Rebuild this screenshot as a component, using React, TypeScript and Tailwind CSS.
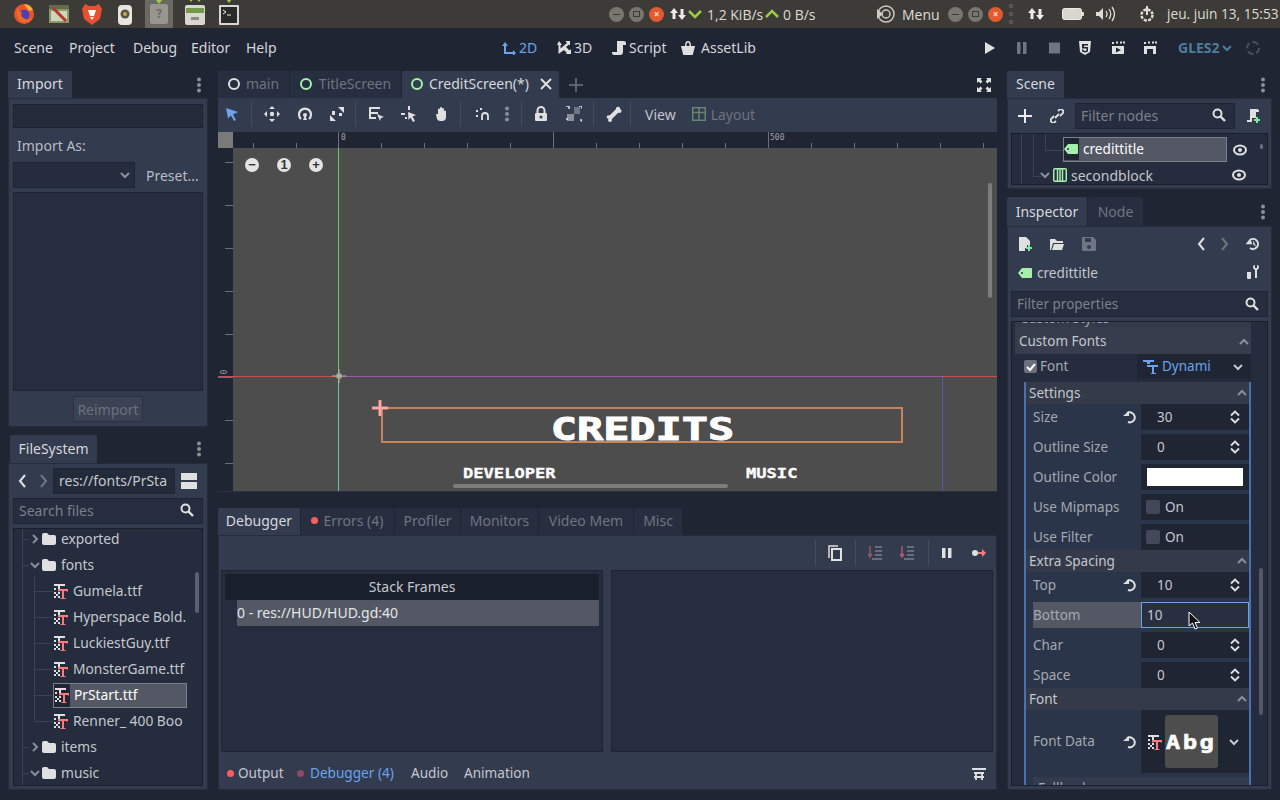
import React from "react";

const W = "#e0e0e0";

function Ic({ w = 16, h = 16, vb, children, className }: { w?: number; h?: number; vb?: string; children: React.ReactNode; className?: string }) {
    return (
        <svg width={w} height={h} viewBox={vb || `0 0 ${w} ${h}`} className={"shrink-0 " + (className || "")}>
            {children}
        </svg>
    );
}

const Dots = () => (
    <Ic w={6} h={16}>
        <circle cx="3" cy="2.5" r="2" fill="#8b8f99" />
        <circle cx="3" cy="8" r="2" fill="#8b8f99" />
        <circle cx="3" cy="13.5" r="2" fill="#8b8f99" />
    </Ic>
);

const Search = () => (
    <Ic w={14} h={14}>
        <circle cx="5.5" cy="5.5" r="4" fill="none" stroke={W} strokeWidth="2" />
        <path d="M8.5 8.5l4.5 4.5" stroke={W} strokeWidth="2.4" />
    </Ic>
);

const Folder = () => (
    <Ic w={14} h={12}>
        <path d="M0 2q0-2 2-2h3l2 2h5q2 0 2 2v6q0 2-2 2H2q-2 0-2-2z" fill={W} />
    </Ic>
);

const Chev = ({ open = false, color = "#8b8f99" }: { open?: boolean; color?: string }) => (
    <Ic w={10} h={10}>
        <path d={open ? "M1 3l4 4 4-4" : "M3 1l4 4-4 4"} fill="none" stroke={color} strokeWidth="2" />
    </Ic>
);

const FontIc = () => (
    <Ic w={16} h={16}>
        <path d="M1 1h11v2H1zM5 3h2v3H5z" fill={W} />
        <path d="M1 5h2v2H1zM1 9h2v2H1zM1 13h2v2H1zM5 9h2v2H5zM5 13h2v2H5zM3 11h2v2H3z" fill={W} />
        <path d="M5 6h10v2.500h-1.500V8H11v7h1.500v1h-5v-1H9V8H6.500v.5H5z" fill="#ff7b7b" />
    </Ic>
);

const Tag = ({ w = 14 }: { w?: number }) => (
    <Ic w={w} h={10} vb="0 0 14 10">
        <path d="M0 5l4-5h9q1 0 1 1v8q0 1-1 1H4z" fill="#a5efac" />
        <circle cx="4" cy="5" r="1" fill="#2c3447" />
    </Ic>
);

const Eye = () => (
    <Ic w={14} h={12}>
        <ellipse cx="7" cy="6" rx="6" ry="4.500" fill="none" stroke={W} strokeWidth="2" />
        <circle cx="7" cy="6" r="2" fill={W} />
    </Ic>
);

const Reset = ({ size = 14 }: { size?: number }) => (
    <Ic w={size} h={size} vb="0 0 14 14">
        <path d="M4 3.200A5 5 0 1 1 5 12" fill="none" stroke={W} strokeWidth="2" />
        <path d="M0 6h6V1z" fill={W} />
    </Ic>
);

const Spin = () => (
    <Ic w={10} h={14}>
        <path d="M1 5.500l4-4 4 4M1 8.500l4 4 4-4" fill="none" stroke={W} strokeWidth="1.800" />
    </Ic>
);

const Up = ({ c = "#8b8f99" }: { c?: string }) => (
    <Ic w={10} h={8}>
        <path d="M1 6l4-4 4 4" fill="none" stroke={c} strokeWidth="2" />
    </Ic>
);

const Sep = ({ className }: { className: string }) => <div className={"w-px h-[26px] bg-[#454c5e] shrink-0 " + className} />;

function EditorTab({ label, active, className }: { label: React.ReactNode; active?: boolean; className: string }) {
    return (
        <div className={"flex items-center justify-center h-full shrink-0 rounded-t-[2px] pb-[2px] " + (active ? "bg-[#333b4f] text-[#d6d8dc] " : "bg-[#272e3f] text-[#70747f] ") + className}>
            {label}
        </div>
    );
}

function OsButtons() {
    return (
        <div className="flex items-center gap-[5px]">
            <div className="w-[15px] h-[15px] rounded-full bg-[#77766f] flex items-center justify-center"><div className="w-[7px] h-px bg-[#3c3b37]" /></div>
            <div className="w-[15px] h-[15px] rounded-full bg-[#77766f] flex items-center justify-center"><div className="w-[7px] h-[6px] border border-[#3c3b37]" /></div>
            <div className="w-[15px] h-[15px] rounded-full bg-[#e25b30] flex items-center justify-center text-[10px] leading-none text-[#f5d8cc] font-bold">×</div>
        </div>
    );
}

const NetArrows = () => (
    <Ic w={18} h={18}>
        <path d="M5 3l4 5H6.500v6h-3V8H1zM13 15l-4-5h2.500V4h3v6H17z" fill="#ececec" />
    </Ic>
);

function OsBar() {
    return (
        <div className="flex items-center h-[28px] bg-[#3c3b37] shrink-0 text-[#dfdbd2] text-[14px] font-['Open_Sans',sans-serif] whitespace-nowrap">
            <div className="w-[13px]" />
            <Ic w={22} h={22}>
                <circle cx="11" cy="11" r="10" fill="#e8542a" />
                <path d="M11 1a10 10 0 0 1 9 6l-4 1-3-4z" fill="#fbb03b" />
                <circle cx="11" cy="12" r="5.500" fill="#4f3fb5" />
                <path d="M4 5q-2 9 5 14 8 2 11-6-3 5-8 3-6-3-3-7-3 0-5-4z" fill="#f36c24" />
            </Ic>
            <div className="w-[13px]" />
            <Ic w={22} h={22}>
                <rect x="1" y="2" width="20" height="18" fill="#8a9a6c" />
                <rect x="1" y="2" width="20" height="4" fill="#5f6e49" />
                <rect x="3" y="8" width="16" height="10" fill="#cfd5bd" />
                <path d="M5 5l13 13" stroke="#b3372c" strokeWidth="3" />
            </Ic>
            <div className="w-[12px]" />
            <Ic w={20} h={24}>
                <path d="M3 2l4 2h6l4-2 3 5-2 10-8 6-8-6L0 7z" fill="#e8502f" />
                <path d="M6 8h8l-2 6h-4zM8 15h4l-2 3z" fill="#fff" />
            </Ic>
            <div className="w-[15px]" />
            <Ic w={16} h={24}>
                <rect x="1" y="3" width="14" height="20" rx="4" fill="#e8e6dc" />
                <circle cx="8" cy="12" r="4.500" fill="#55534a" />
                <circle cx="8" cy="12" r="2" fill="#c8a83c" />
            </Ic>
            <div className="w-[12px]" />
            <div className="w-[28px] h-[28px] bg-[#6a6962] flex items-center justify-center relative">
                <div className="absolute top-0 left-[11px] w-0 h-0 border-x-[3px] border-x-transparent border-t-[4px] border-t-[#9ccc4a]" />
                <div className="w-[18px] h-[20px] bg-[#98968e] rounded-[2px] flex items-center justify-center text-[#6a6962] text-[12px] font-bold">?</div>
            </div>
            <div className="w-[12px]" />
            <div className="relative">
                <div className="absolute -top-[4px] left-[3px] flex gap-[2px]">
                    <div className="w-0 h-0 border-x-[3px] border-x-transparent border-t-[4px] border-t-[#9ccc4a]" />
                    <div className="w-0 h-0 border-x-[3px] border-x-transparent border-t-[4px] border-t-[#9ccc4a]" />
                </div>
                <Ic w={20} h={24}>
                    <rect x="0" y="3" width="20" height="20" rx="2" fill="#d8d7d0" />
                    <rect x="1" y="6" width="18" height="5" fill="#6f9a48" />
                    <rect x="6" y="15" width="8" height="3" fill="#8b8a84" />
                </Ic>
            </div>
            <div className="w-[14px]" />
            <div className="relative">
                <div className="absolute -top-[4px] left-[7px] w-0 h-0 border-x-[3px] border-x-transparent border-t-[4px] border-t-[#9ccc4a]" />
                <Ic w={20} h={22}>
                    <rect x="0" y="2" width="20" height="20" rx="1" fill="#d8d7d0" />
                    <rect x="2" y="4" width="16" height="16" fill="#2a2a2a" />
                    <path d="M4 7l3 2-3 2M8 12h4" fill="none" stroke="#eee" strokeWidth="1" />
                </Ic>
            </div>
            <div className="w-[370px]" />
            <OsButtons />
            <div className="w-[5px]" />
            <NetArrows />
            <Ic w={14} h={10} className="ml-[1px]"><path d="M1 2l6 6 6-6" fill="none" stroke="#9ccc4a" strokeWidth="2.500" /></Ic>
            <span className="ml-[5px] w-[58px]">1,2 KiB/s</span>
            <Ic w={14} h={10}><path d="M1 8l6-6 6 6" fill="none" stroke="#9ccc4a" strokeWidth="2.500" /></Ic>
            <span className="ml-[4px] w-[93px]">0 B/s</span>
            <Ic w={20} h={20}>
                <circle cx="10" cy="10" r="8" fill="none" stroke="#cfcbc2" strokeWidth="1.500" />
                <circle cx="10" cy="10" r="4" fill="none" stroke="#cfcbc2" strokeWidth="1.500" />
                <path d="M1 5v10l6-5z" fill="#cfcbc2" />
            </Ic>
            <span className="ml-[6px] w-[46px]">Menu</span>
            <OsButtons />
            <div className="ml-[6px] w-[4px] h-[20px] flex flex-col justify-between">
                <div className="h-[4px] bg-[#55544e]" /><div className="h-[4px] bg-[#55544e]" /><div className="h-[4px] bg-[#55544e]" />
            </div>
            <div className="w-[14px]" />
            <NetArrows />
            <div className="w-[17px]" />
            <Ic w={22} h={12}><rect x="0.500" y="0.500" width="19" height="11" rx="2" fill="#d8d5cc" stroke="#ececec" /><rect x="20" y="4" width="2" height="4" fill="#d8d5cc" /></Ic>
            <div className="w-[11px]" />
            <Ic w={20} h={16}>
                <path d="M1 6h3l4-4v12l-4-4H1z" fill="#dfdbd2" />
                <path d="M11 5q2 3 0 6M14 3q3.500 5 0 10M17 1q5 7 0 14" fill="none" stroke="#dfdbd2" strokeWidth="1.300" />
            </Ic>
            <div className="w-[23px]" />
            <Ic w={18} h={18}>
                <circle cx="9" cy="10" r="5.500" fill="none" stroke="#dfdbd2" strokeWidth="2.500" strokeDasharray="3 1.300" />
                <path d="M9 1v9" stroke="#dfdbd2" strokeWidth="2" />
            </Ic>
            <span className="ml-[11px] text-[13.700px]">jeu. juin 13, 15:53</span>
        </div>
    );
}

function MenuBar() {
    return (
        <div className="flex items-center h-[42px] shrink-0 pb-[3px] text-[14px] text-[#d4d6da] whitespace-nowrap">
            <span className="ml-[14px] w-[55px]">Scene</span>
            <span className="w-[64px]">Project</span>
            <span className="w-[58px]">Debug</span>
            <span className="w-[55px]">Editor</span>
            <span className="w-[40px]">Help</span>
            <div className="w-[216px]" />
            <Ic w={14} h={14}><path d="M3 1L0 5h2v8h9v2l3-3-3-3v2H4V5h2z" fill="#6ba3ec" /></Ic>
            <span className="ml-[3px] w-[38px] text-[#6ba3ec]">2D</span>
            <Ic w={14} h={14}><path d="M2 0L0 4h1.500v9L7 9l3 3-1.500 1H14v-5l-1.500 1.500L9 6l3-2.500 1 1V0H8.500L10 2 3.500 7.500V4H5z" fill={W} /></Ic>
            <span className="ml-[3px] w-[38px]">3D</span>
            <Ic w={14} h={16}><path d="M5 1h7q2 0 2 2v2h-3v7q0 3-3 3H2q-2 0-2-2v-1h5V3q0-2 0-2z" fill={W} /></Ic>
            <span className="ml-[3px] w-[52px]">Script</span>
            <Ic w={14} h={14}><path d="M0 5h14l-2 8q0 1-1 1H3q-1 0-1-1zM4 5q0-5 3-5t3 5H8.500q0-3.500-1.500-3.500T5.500 5z" fill={W} /></Ic>
            <span className="ml-[6px] w-[283px]">AssetLib</span>
            <Ic w={12} h={12} className="mr-[20px]"><path d="M1 0l10 6-10 6z" fill={W} /></Ic>
            <Ic w={12} h={12} className="mr-[21px]"><path d="M1 0h3.500v12H1zM7 0h3.500v12H7z" fill="#6f7582" /></Ic>
            <Ic w={12} h={12} className="mr-[18px]"><rect width="11" height="11" y="0.500" fill="#6f7582" /></Ic>
            <Ic w={12} h={14} className="mr-[20px]"><path d="M0 0h12l-1 11-5 3-5-3z" fill={W} /><path d="M3 3h6v1.500H5V6h4v4.500l-3 1-3-1V8.500h1.500v1l1.500.5 1.500-.5V7.500H3z" fill="#1f2533" /></Ic>
            <Ic w={14} h={14} className="mr-[18px]"><path d="M1 5h12v8H1z" fill={W} /><path d="M1 1h2v2H1zM5 0.500h2v2H5zM9 0.500h2v2H9zM12 0.500h2v2h-2z" fill={W} /><path d="M5 6.500l5 2.500-5 2.500z" fill="#1f2533" /></Ic>
            <Ic w={14} h={14} className="mr-[21px]"><path d="M1 5h12v8H1z" fill={W} /><path d="M1 1h2v2H1zM5 0.500h2v2H5zM9 0.500h2v2H9zM12 0.500h2v2h-2z" fill={W} /><rect x="4" y="8" width="6" height="5" fill="#1f2533" /></Ic>
            <span className="font-bold text-[#4d7d9d] w-[44px]">GLES2</span>
            <Chev open color="#4d7d9d" />
            <div className="ml-[14px] w-[14px] h-[14px] rounded-full border-2 border-dashed border-[#4a5060]" />
        </div>
    );
}

function ImportDock() {
    return (
        <div className="h-[356px] flex flex-col shrink-0">
            <div className="h-[27px] flex shrink-0 items-center">
                <EditorTab active label="Import" className="w-[64px] text-[14px] bg-[#333b4f]" />
                <div className="ml-auto mr-[6px]"><Dots /></div>
            </div>
            <div className="flex-1 bg-[#333b4f] border border-[#262c3b] px-[4px] pt-[5px] text-[14px] flex flex-col">
                <div className="h-[24px] bg-[#232a3a] border border-[#1e2431] shrink-0" />
                <div className="h-[34px] leading-[36px] pl-[4px] text-[#b9bcc4] shrink-0">Import As:</div>
                <div className="flex items-center shrink-0">
                    <div className="w-[122px] h-[26px] bg-[#252c3d] border border-[#1e2431] flex items-center justify-end pr-[4px]"><Chev open /></div>
                    <span className="ml-[11px] text-[#b9bcc4]">Preset...</span>
                </div>
                <div className="mt-[4px] h-[199px] bg-[#262d3f] border border-[#1e2431] shrink-0" />
                <div className="mt-[5px] mx-auto w-[70px] h-[26px] bg-[#3b4253] border border-[#2b3143] rounded-[2px] flex items-center justify-center text-[#6c717d]">Reimport</div>
            </div>
        </div>
    );
}

function FileRow({ name, kind, open, sel }: { name: string; kind: "dir" | "file"; open?: boolean; sel?: boolean }) {
    if (kind === "dir") {
        return (
            <div className="relative h-[26px] flex items-center text-[#c4c7cd]">
                <div className="absolute left-[8px] top-[13px] w-[7px] h-px bg-[#3c4354]" />
                <div className="ml-[16px] w-[10px]"><Chev open={open} /></div>
                <div className="ml-[2px]"><Folder /></div>
                <span className="ml-[5px]">{name}</span>
            </div>
        );
    }
    return (
        <div className="relative h-[26px] flex items-center pl-[39px]">
            <div className="absolute left-[20px] top-[13px] w-[19px] h-px bg-[#3c4354]" />
            <div className={"flex items-center h-[25px] w-[134px] " + (sel ? "bg-[#535864] border border-[#7a7f89] text-white" : "text-[#c4c7cd]")}>
                <div className={"w-[16px] h-full flex items-center " + (sel ? "bg-[#1f2533]" : "")}><FontIc /></div>
                <span className="ml-[4px] overflow-hidden whitespace-nowrap w-[114px]">{name}</span>
            </div>
        </div>
    );
}

function FileDock() {
    return (
        <div className="mt-[8px] flex-1 flex flex-col min-h-0">
            <div className="h-[28px] flex shrink-0 items-center">
                <div className="w-[2px]" />
                <EditorTab active label="FileSystem" className="w-[87px] text-[14px]" />
                <div className="ml-auto mr-[6px]"><Dots /></div>
            </div>
            <div className="flex-1 bg-[#333b4f] border border-[#262c3b] px-[4px] pb-[3px] text-[14px] flex flex-col min-h-0">
                <div className="h-[34px] flex items-center shrink-0">
                    <Ic w={10} h={14} className="ml-[5px]"><path d="M7 1L2 7l5 6" fill="none" stroke={W} strokeWidth="2" /></Ic>
                    <Ic w={10} h={14} className="ml-[10px]"><path d="M3 1l5 6-5 6" fill="none" stroke="#6f7582" strokeWidth="2" /></Ic>
                    <div className="ml-[5px] w-[122px] h-[26px] pb-[2px] bg-[#232a3a] border border-[#1e2431] flex items-center pl-[5px] text-[#c4c7cd] overflow-hidden whitespace-nowrap">res://fonts/PrSta</div>
                    <div className="ml-[6px] w-[16px] flex flex-col gap-[2px]">
                        <div className="h-[7px] bg-[#e0e0e0]" /><div className="h-[7px] bg-[#e0e0e0]" />
                    </div>
                </div>
                <div className="h-[26px] pb-[2px] bg-[#262d3f] border border-[#1e2431] flex items-center justify-between pl-[5px] pr-[8px] text-[#7b808b] shrink-0">Search files<Search /></div>
                <div className="relative mt-[4px] flex-1 bg-[#252c3d] border border-[#1a1f2c] overflow-hidden min-h-0 text-[13.800px]">
                    <div className="-mt-[3px]">
                        <FileRow kind="dir" name="exported" />
                        <FileRow kind="dir" open name="fonts" />
                        <FileRow kind="file" name="Gumela.ttf" />
                        <FileRow kind="file" name="Hyperspace Bold." />
                        <FileRow kind="file" name="LuckiestGuy.ttf" />
                        <FileRow kind="file" name="MonsterGame.ttf" />
                        <FileRow kind="file" sel name="PrStart.ttf" />
                        <FileRow kind="file" name="Renner_ 400 Boo" />
                        <FileRow kind="dir" name="items" />
                        <FileRow kind="dir" open name="music" />
                    </div>
                    <div className="absolute left-[8px] top-0 bottom-0 w-px bg-[#3c4354]" />
                    <div className="absolute left-[20px] top-[48px] h-[145px] w-px bg-[#3c4354]" />
                    <div className="absolute right-[3px] top-[43px] w-[4px] h-[41px] rounded-full bg-[#5a6070]" />
                </div>
            </div>
        </div>
    );
}

function Rulers() {
    const xs = [253, 296, 338, 381, 424, 467, 510, 553, 596, 639, 682, 725, 768, 811, 854, 897, 940, 983];
    const ys = [162, 205, 248, 291, 334, 377, 420, 463];
    return (
        <svg width="779" height="360" className="absolute left-0 top-0">
            <rect x="0" y="0" width="779" height="16" fill="#1f2533" />
            <rect x="0" y="0" width="15" height="360" fill="#1f2533" />
            <rect x="0" y="0" width="15" height="16" fill="#7a7a7a" />
            {xs.map((x) => {
                const major = x === 338 || x === 768 || x === 553;
                return <line key={x} x1={x - 218 + 0.5} x2={x - 218 + 0.5} y1={major ? 0 : 11} y2="16" stroke="#6a6f7b" />;
            })}
            {ys.map((y) => (
                <line key={y} y1={y - 132 + 0.5} y2={y - 132 + 0.5} x1={y === 377 ? 0 : 7} x2="15" stroke="#6a6f7b" />
            ))}
        </svg>
    );
}

function Canvas() {
    return (
        <div className="relative h-[360px] bg-[#4d4d4d] border-b border-[#2a3040] overflow-hidden shrink-0 font-['DejaVu_Sans_Mono',monospace] font-bold text-white">
            <Rulers />
            <span className="absolute left-[123px] top-[0px] text-[8px] text-[#a0a3aa] font-normal">0</span>
            <span className="absolute left-[552px] top-[0px] text-[8px] text-[#a0a3aa] font-normal">500</span>
            <span className="absolute left-[5px] top-[234px] text-[8px] text-[#a0a3aa] font-normal -rotate-90">0</span>
            <div className="absolute left-[27px] top-[26px] flex gap-[18px]">
                {["−", "1", "+"].map((s) => (
                    <div key={s} className="w-[14px] h-[14px] rounded-full bg-[#e4e4e4] text-[#333] text-[13px] font-bold leading-[14px] text-center font-['Liberation_Sans',sans-serif]">{s}</div>
                ))}
            </div>
            {/* guides */}
            <div className="absolute left-0 right-0 top-[244px] h-px bg-[#c8504e]" />
            <div className="absolute left-[120px] w-[604px] top-[244px] h-px bg-[#a055a8]" />
            <div className="absolute left-[120px] top-[16px] h-[228px] w-px bg-[#5cd05a]" />
            <div className="absolute left-[120px] top-[245px] bottom-0 w-px bg-[#6fc0b8]" />
            <div className="absolute left-[724px] top-[245px] bottom-0 w-px bg-[#5a5ab0]" />
            <svg width="16" height="16" className="absolute left-[113px] top-[236px]">
                <circle cx="8" cy="8" r="3" fill="#9aa08c" />
                <path d="M8 1v14M1 8h14" stroke="#b8b8a8" strokeWidth="1" />
            </svg>
            {/* selected label */}
            <div className="absolute left-[163px] top-[275px] w-[522px] h-[36px] border-2 border-[#c9835a] flex items-center justify-center">
                <span className="text-[32px] leading-none pt-[7px] scale-x-[1.36] [-webkit-text-stroke:1px_white]">CREDITS</span>
            </div>
            <svg width="16" height="16" className="absolute left-[154px] top-[268px]">
                <path d="M8 0v16M0 8h16" stroke="#ff9a9a" strokeWidth="3" />
                <path d="M8 1v14M1 8h14" stroke="#fff" strokeWidth="0.600" opacity="0.500" />
            </svg>
            <span className="absolute left-[245px] top-[334px] text-[14px] leading-none origin-left scale-x-[1.22] [-webkit-text-stroke:0.300px_white]">DEVELOPER</span>
            <span className="absolute left-[528px] top-[334px] text-[14px] leading-none origin-left scale-x-[1.22] [-webkit-text-stroke:0.300px_white]">MUSIC</span>
            <div className="absolute left-[235px] top-[352px] w-[275px] h-[4px] rounded-full bg-[#7d7d7d]" />
            <div className="absolute right-[5px] top-[51px] w-[4px] h-[115px] rounded-full bg-[#7d7d7d]" />
        </div>
    );
}

function Toolbar() {
    return (
        <div className="h-[34px] bg-[#333b4f] flex items-center shrink-0 pb-[2px] text-[14px] whitespace-nowrap">
            <Ic w={14} h={14} className="ml-[7px]"><path d="M1 1l12 4-5 2.500L11 13l-2 1-3-5.500-3 3z" fill="#6ba3ec" /></Ic>
            <Sep className="ml-[12px]" />
            <Ic w={16} h={16} className="ml-[12px]">
                <path d="M8 0l3 3H5zM8 16l-3-3h6zM0 8l3-3v6zM16 8l-3 3V5z" fill={W} />
                <circle cx="8" cy="8" r="2.200" fill={W} />
            </Ic>
            <Ic w={16} h={16} className="ml-[17px]">
                <path d="M4 13A6 6 0 1 1 12 13" fill="none" stroke={W} strokeWidth="2.200" />
                <circle cx="8" cy="9" r="2" fill={W} />
                <path d="M6 14l2-5 2 5z" fill={W} />
            </Ic>
            <Ic w={16} h={16} className="ml-[16px]">
                <path d="M9 1h6v6zM1 9l6 6H1z" fill={W} />
                <rect x="3" y="5" width="3" height="4" fill={W} />
                <rect x="10" y="7" width="3" height="3" fill={W} />
            </Ic>
            <Sep className="ml-[10px]" />
            <Ic w={16} h={16} className="ml-[12px]">
                <path d="M1 1h11v2H3v3h7v2H3v3h5v2H1z" fill={W} />
                <path d="M9 8l7 3-3 1-1 3z" fill={W} />
            </Ic>
            <Ic w={16} h={16} className="ml-[17px]">
                <path d="M0 7h4v2H0zM7 0h2v4H7zM4 11h2v2H4z" fill={W} />
                <path d="M7 6l8 3-3.500 1.500L14 15l-2 1-2.500-4.500L7.500 14z" fill={W} />
            </Ic>
            <Ic w={16} h={16} className="ml-[16px]">
                <path d="M3 8l2 0V3q1-1 2 0v3V1.500q1-1 2 0V6V2.500q1-1 2 0V7V5q1-1 2 0v6q0 4-4 4H7q-2 0-3-2z" fill={W} />
            </Ic>
            <Sep className="ml-[11px]" />
            <Ic w={14} h={14} className="ml-[15px]">
                <path d="M6 13V9a3 3 0 0 1 6 0v4" fill="none" stroke={W} strokeWidth="1.800" />
                <path d="M0 3h2v2H0zM4 1h2v2H4zM0 8h2v2H0z" fill={W} />
            </Ic>
            <div className="ml-[14px]"><Dots /></div>
            <Sep className="ml-[11px]" />
            <Ic w={14} h={16} className="ml-[12px]">
                <rect x="1" y="7" width="12" height="8" rx="1" fill={W} />
                <path d="M3.500 7V4.500a3.500 3.500 0 0 1 7 0V7" fill="none" stroke={W} strokeWidth="2" />
                <circle cx="7" cy="11" r="1.500" fill="#333b4f" />
            </Ic>
            <Ic w={16} h={16} className="ml-[18px]">
                <rect x="1" y="8" width="7" height="7" fill="#8b8f99" />
                <rect x="8" y="1" width="6" height="7" fill="#6f7582" />
                <path d="M0 0h3v3M13 0h3v3M0 13h2M14 14h2v2" fill="none" stroke={W} strokeWidth="1.500" />
            </Ic>
            <Sep className="ml-[11px]" />
            <Ic w={16} h={16} className="ml-[12px]">
                <path d="M4 12l8-8" stroke={W} strokeWidth="4" />
                <circle cx="12" cy="3" r="2.200" fill={W} />
                <circle cx="13.500" cy="5" r="2" fill={W} />
                <circle cx="4" cy="14" r="2" fill={W} />
                <circle cx="2.500" cy="11" r="1.800" fill={W} />
            </Ic>
            <Sep className="ml-[8px]" />
            <span className="ml-[14px] text-[#c4c7cd]">View</span>
            <Ic w={14} h={14} className="ml-[16px]"><path d="M0.750 0.750h12.500v12.500H0.750zM7 1v12M1 5.500h12" fill="none" stroke="#64856f" strokeWidth="1.500" /></Ic>
            <span className="ml-[5px] text-[#6d7380]">Layout</span>
        </div>
    );
}

function DebugTabs() {
    return (
        <div className="h-[27px] flex text-[14px] gap-[1px] shrink-0">
            <EditorTab active label="Debugger" className="w-[82px]" />
            <EditorTab label={<span className="flex items-center"><span className="w-[7px] h-[7px] rounded-full bg-[#ff5d5d] mr-[5px]" />Errors (4)</span>} className="w-[93px]" />
            <EditorTab label="Profiler" className="w-[65px]" />
            <EditorTab label="Monitors" className="w-[77px]" />
            <EditorTab label="Video Mem" className="w-[94px]" />
            <EditorTab label="Misc" className="w-[48px]" />
        </div>
    );
}

function Debugger() {
    return (
        <div className="mt-[16px] flex-1 flex flex-col min-h-0">
            <DebugTabs />
            <div className="flex-1 bg-[#333b4f] border border-[#262c3b] flex flex-col px-[2px] min-h-0 text-[14px]">
                <div className="h-[34px] flex items-center justify-end shrink-0 pr-[4px]">
                    <Sep className="mr-[12px]" />
                    <Ic w={14} h={16} className="mr-[13px]"><path d="M1 13V1h9" fill="none" stroke={W} strokeWidth="1.500" /><rect x="4" y="4" width="9" height="11" fill="none" stroke={W} strokeWidth="2" /></Ic>
                    <Sep className="mr-[12px]" />
                    <Ic w={14} h={14} className="mr-[18px]"><path d="M2 0v10M0 8l2 3 2-3" fill="none" stroke="#8f5a66" strokeWidth="1.500" /><path d="M7 1h7M7 5h7M7 9h7M4 13h10" stroke="#7b808b" strokeWidth="1.500" /></Ic>
                    <Ic w={14} h={14} className="mr-[14px]"><path d="M2 0v10M0 8l2 3 2-3" fill="none" stroke="#b35a66" strokeWidth="1.500" /><path d="M7 1h7M7 5h7M7 9h7M4 13h10" stroke="#7b808b" strokeWidth="1.500" /></Ic>
                    <Sep className="mr-[13px]" />
                    <Ic w={10} h={12} className="mr-[20px]"><path d="M0 1h3.500v10H0zM6 1h3.500v10H6z" fill={W} /></Ic>
                    <Ic w={14} h={10} className="mr-[4px]"><circle cx="3" cy="5" r="3" fill={W} /><path d="M6 4h4V1l4 4-4 4V6H6z" fill="#ff7b7b" /></Ic>
                </div>
                <div className="h-[182px] flex gap-[8px] shrink-0">
                    <div className="w-[382px] bg-[#262d3f] border border-[#1e2431] p-[3px]">
                        <div className="h-[26px] pb-[2px] bg-[#1a1f2c] flex items-center justify-center text-[#c4c7cd]">Stack Frames</div>
                        <div className="h-[26px] pb-[2px] ml-[12px] bg-[#535864] flex items-center text-[#e4e5e8] whitespace-nowrap">0 - res://HUD/HUD.gd:40</div>
                    </div>
                    <div className="w-[382px] bg-[#262d3f] border border-[#1e2431]" />
                </div>
                <div className="flex-1 flex items-center pl-[6px] pt-[6px] text-[#c4c7cd] text-[13.600px] whitespace-nowrap">
                    <span className="w-[7px] h-[7px] rounded-full bg-[#ff5d5d] mr-[4px]" />
                    <span className="w-[59px]">Output</span>
                    <span className="w-[7px] h-[7px] rounded-full bg-[#8a4a68] mr-[6px]" />
                    <span className="w-[101px] text-[#6ba3ec]">Debugger (4)</span>
                    <span className="w-[53px]">Audio</span>
                    <span>Animation</span>
                    <Ic w={14} h={12} className="ml-auto mr-[8px]"><path d="M0 1h14M2 5h10M4 5v7M10 5v7M2 9h10" stroke={W} strokeWidth="1.800" fill="none" /></Ic>
                </div>
            </div>
        </div>
    );
}

function PropRow({ label, value, reset, spin = true }: { label: string; value: string; reset?: boolean; spin?: boolean }) {
    return (
        <div className="h-[26px] flex items-center shrink-0 pl-[7px]">
            <span className="w-[90px] text-[#a4a8b0]">{label}</span>
            <div className="w-[18px]">{reset && <Reset />}</div>
            <div className="w-[108px] h-[26px] bg-[#1f2533] flex items-center pl-[16px] pr-[9px] justify-between text-[#c4c7cd]">
                {value}
                {spin && <Spin />}
            </div>
        </div>
    );
}

function CheckRow({ label }: { label: string }) {
    return (
        <div className="h-[26px] flex items-center shrink-0 pl-[7px]">
            <span className="w-[108px] text-[#a4a8b0]">{label}</span>
            <div className="w-[108px] h-[26px] bg-[#1f2533] flex items-center pl-[5px] text-[#c4c7cd]">
                <div className="w-[14px] h-[14px] rounded-[2px] bg-[#42485a] mr-[5px]" />On
            </div>
        </div>
    );
}

function Section({ label }: { label: string }) {
    return (
        <div className="h-[22px] bg-[#343a4a] flex items-center justify-between pl-[3px] pr-[2px] text-[#c4c7cd] shrink-0">
            {label}
            <Up />
        </div>
    );
}

const Cursor = () => (
    <svg width="14" height="20" className="absolute left-[46px] top-[8px]">
        <path d="M1 1v14l3.500-3 2.500 6 2.500-1-2.500-5.500H12z" fill="#111" stroke="#fff" strokeWidth="1" />
    </svg>
);

function InspectorTree() {
    return (
        <div className="relative mt-[4px] flex-1 bg-[#252c3d] border border-[#1a1f2c] overflow-hidden text-[13.500px] min-h-0 pl-[3px]">
            <div className="w-[236px] h-[5px] bg-[#343a4a] relative overflow-hidden shrink-0">
                <span className="absolute left-[5px] -top-[14px] text-[#a4a8b0] whitespace-nowrap">Custom Styles</span>
            </div>
            <div className="w-[236px] h-[27px] pt-[2px] bg-[#373d4d] flex items-center justify-between pl-[4px] pr-[2px] text-[#c4c7cd]">
                Custom Fonts
                <Up />
            </div>
            <div className="w-[236px] h-[25px] flex items-center pl-[9px]">
                <div className="w-[13px] h-[13px] rounded-[2px] bg-[#6a6f7b] flex items-center justify-center"><Ic w={10} h={10}><path d="M1 5l3 3 5-6" fill="none" stroke="#fff" strokeWidth="2" /></Ic></div>
                <span className="ml-[3px] w-[97px] text-[#a4a8b0]">Font</span>
                <div className="w-[114px] h-[25px] bg-[#1f2533] flex items-center pl-[6px] pr-[8px] text-[#6ba3ec]">
                    <Ic w={15} h={15}><path d="M0 1h11v2H7v2H4V3H0zM4 6h11v2h-4v6h2v1H8v-1h1V8H4z" fill="#6ba3ec" /></Ic>
                    <span className="ml-[4px] flex-1">Dynami</span>
                    <Chev open color="#c4c7cd" />
                </div>
            </div>
            <div className="ml-[9px] mt-[3px] w-[227px] border-x-2 border-[#4a73ad] bg-[#2a3549] flex flex-col">
                <Section label="Settings" />
                <div className="flex flex-col gap-[4px]">
                    <PropRow label="Size" value="30" reset />
                    <PropRow label="Outline Size" value="0" />
                    <div className="h-[26px] flex items-center shrink-0 pl-[7px]">
                        <span className="w-[108px] text-[#a4a8b0]">Outline Color</span>
                        <div className="w-[108px] h-[26px] bg-[#1f2533] flex items-center pl-[6px] pr-[6px]">
                            <div className="w-full h-[18px] bg-white" />
                        </div>
                    </div>
                    <CheckRow label="Use Mipmaps" />
                    <CheckRow label="Use Filter" />
                </div>
                <Section label="Extra Spacing" />
                <div className="flex flex-col gap-[4px]">
                    <PropRow label="Top" value="10" reset />
                    <div className="h-[26px] flex items-center shrink-0 pl-[7px]">
                        <div className="w-[108px] h-[26px] bg-[#535864] flex items-center text-[#a4a8b0]">Bottom</div>
                        <div className="relative w-[108px] h-[26px] bg-[#272f41] border border-[#6ba3ec] flex items-center pl-[5px] text-[#c4c7cd]">
                            10
                            <Cursor />
                        </div>
                    </div>
                    <PropRow label="Char" value="0" />
                    <PropRow label="Space" value="0" />
                </div>
                <Section label="Font" />
                <div className="h-[63px] flex items-center shrink-0 pl-[7px]">
                    <span className="w-[90px] text-[#a4a8b0]">Font Data</span>
                    <div className="w-[18px]"><Reset /></div>
                    <div className="w-[108px] h-[63px] bg-[#1f2533] flex items-center pl-[6px]">
                        <FontIc />
                        <div className="ml-[2px] w-[53px] h-[53px] rounded-[3px] bg-[#4d4d4d] flex items-center justify-center overflow-hidden text-white font-['DejaVu_Sans_Mono',monospace] font-bold text-[20px] whitespace-nowrap">
                            <span className="scale-x-[1.2] tracking-[2px] [-webkit-text-stroke:0.500px_white]">Abg</span>
                        </div>
                        <div className="ml-[11px]"><Chev open color="#c4c7cd" /></div>
                    </div>
                </div>
                <div className="mt-[4px] ml-[7px] h-[30px] bg-[#333c4e] pl-[5px] text-[#a4a8b0] leading-[22px]">Fallback</div>
            </div>
            <div className="absolute left-[247px] top-[246px] w-[4px] h-[147px] rounded-full bg-[#525868]" />
        </div>
    );
}

function RightDock() {
    return (
        <div className="w-[265px] shrink-0 flex flex-col text-[14px]">
            <div className="h-[27px] flex shrink-0 items-center">
                <EditorTab active label="Scene" className="w-[57px]" />
                <div className="ml-auto mr-[6px]"><Dots /></div>
            </div>
            <div className="h-[91px] bg-[#333b4f] border border-[#262c3b] px-[3px] shrink-0 flex flex-col">
                <div className="h-[34px] flex items-center shrink-0">
                    <Ic w={14} h={14} className="ml-[7px]"><path d="M7 0v14M0 7h14" stroke="#ececec" strokeWidth="2" /></Ic>
                    <Ic w={14} h={14} className="ml-[18px]"><path d="M5 9l4-4" stroke={W} strokeWidth="2" /><path d="M6 12l-1.500 1.500q-1.500 1-3-.5t-.5-3L4 7M8 2l1.500-1.500q1.500-1 3 .5t.5 3L10 7" fill="none" stroke={W} strokeWidth="1.800" /></Ic>
                    <div className="ml-[11px] w-[160px] h-[26px] pb-[2px] bg-[#262d3f] border border-[#1e2431] flex items-center justify-between pl-[5px] pr-[8px] text-[#7b808b]">Filter nodes<Search /></div>
                    <Ic w={14} h={16} className="ml-[11px]"><path d="M4 1h7q2 0 2 2v1h-3v6H6v4H1v-2h3z" fill={W} /><path d="M10 9v2H8v2h2v2h2v-2h2v-2h-2V9z" fill="#7de8a0" /></Ic>
                </div>
                <div className="relative h-[52px] bg-[#252c3d] border border-[#1a1f2c] overflow-hidden shrink-0">
                    <div className="absolute left-[9px] top-0 bottom-0 w-px bg-[#3c4354]" />
                    <div className="absolute left-[21px] top-0 h-[41px] w-px bg-[#3c4354]" />
                    <div className="absolute left-[33px] top-0 h-[16px] w-px bg-[#3c4354]" />
                    <div className="absolute left-[33px] top-[16px] w-[18px] h-px bg-[#3c4354]" />
                    <div className="absolute left-[21px] top-[42px] w-[8px] h-px bg-[#3c4354]" />
                    <div className="h-[3px]" />
                    <div className="h-[25px] flex items-center">
                        <div className="ml-[51px] w-[164px] h-[25px] pb-[1px] bg-[#535864] border border-[#7a7f89] flex items-center text-white text-[13.600px]">
                            <div className="w-[15px] h-full bg-[#1f2533] flex items-center"><Tag /></div>
                            <span className="ml-[4px]">credittitle</span>
                        </div>
                        <div className="ml-[6px]"><Eye /></div>
                    </div>
                    <div className="h-[26px] flex items-center text-[#c4c7cd]">
                        <div className="ml-[28px]"><Chev open /></div>
                        <Ic w={14} h={14} className="ml-[3px]"><rect x="0.750" y="0.750" width="12.500" height="12.500" rx="1" fill="none" stroke="#a5efac" strokeWidth="1.500" /><path d="M4.500 1v12M7 1v12M9.500 1v12" stroke="#a5efac" strokeWidth="1.500" /></Ic>
                        <span className="ml-[4px] w-[161px]">secondblock</span>
                        <Eye />
                    </div>
                    <div className="absolute right-[4px] top-[10px] w-[3px] h-[5px] rounded-full bg-[#6a7080]" />
                </div>
            </div>
            <div className="h-[29px] mt-[8px] flex shrink-0 [&>div]:pb-0">
                <EditorTab active label="Inspector" className="w-[80px]" />
                <EditorTab label="Node" className="ml-[1px] w-[55px]" />
                <div className="ml-auto mr-[6px] self-center"><Dots /></div>
            </div>
            <div className="flex-1 bg-[#333b4f] border border-[#262c3b] px-[3px] pb-[3px] flex flex-col min-h-0">
                <div className="h-[34px] flex items-center shrink-0">
                    <Ic w={14} h={16} className="ml-[7px]"><path d="M1 1h7l4 4v4H9v3H7v3H1z" fill={W} /><path d="M10 9v2H8v2h2v2h2v-2h2v-2h-2V9z" fill="#7de8a0" /></Ic>
                    <Ic w={14} h={14} className="ml-[18px]"><path d="M0 2h5l2 2h6v2H3L1 13H0z" fill={W} /><path d="M4 7h10l-2 6H2z" fill={W} /></Ic>
                    <Ic w={14} h={14} className="ml-[18px]"><path d="M0 1q0-1 1-1h10l3 3v10q0 1-1 1H1q-1 0-1-1z" fill="#6f7582" /><rect x="3" y="1" width="6" height="4" fill="#333b4f" /><circle cx="7" cy="10" r="2" fill="#333b4f" /></Ic>
                    <Ic w={8} h={14} className="ml-[101px]"><path d="M7 1L2 7l5 6" fill="none" stroke={W} strokeWidth="2" /></Ic>
                    <Ic w={8} h={14} className="ml-[16px]"><path d="M1 1l5 6-5 6" fill="none" stroke="#6f7582" strokeWidth="2" /></Ic>
                    <Ic w={14} h={14} className="ml-[17px]"><path d="M4 3A5 5 0 1 1 4 11" fill="none" stroke={W} strokeWidth="2" /><path d="M0 7h6L4 2zM7.500 4v3.500l2.500 1.500" fill={W} stroke={W} strokeWidth="0.500" /></Ic>
                </div>
                <div className="h-[26px] pb-[2px] flex items-center shrink-0 text-[#c4c7cd]">
                    <div className="ml-[7px]"><Tag /></div>
                    <span className="ml-[5px] w-[210px] text-[13.600px]">credittitle</span>
                    <Ic w={12} h={16}><path d="M2 0v7M0 7h4v6q0 1-1 1H1q-1 0-1-1zM8 8V5q-2-1-2-3t2-2v3h2V0q2 0 2 2t-2 3v8H8z" fill={W} /></Ic>
                </div>
                <div className="mt-[4px] h-[26px] bg-[#262d3f] border border-[#1e2431] flex items-center justify-between pl-[5px] pr-[8px] text-[#7b808b] shrink-0 text-[13.500px]">Filter properties<Search /></div>
                <InspectorTree />
            </div>
        </div>
    );
}

export default function App() {
    return (
        <div className="w-[1280px] h-[800px] overflow-hidden bg-[#1f2533] flex flex-col font-['Noto_Sans',sans-serif] text-[14px]">
            <OsBar />
            <MenuBar />
            <div className="flex-1 flex min-h-0 pl-[8px] pb-[10px] pt-[1px]">
                <div className="w-[200px] shrink-0 flex flex-col min-h-0">
                    <ImportDock />
                    <FileDock />
                </div>
                <div className="ml-[10px] w-[779px] shrink-0 flex flex-col min-h-0">
                    <div className="h-[27px] flex text-[14px] shrink-0 items-center">
                        <EditorTab label={<span className="flex items-center"><span className="w-[12px] h-[12px] rounded-full border-2 border-[#e0e0e0] mr-[6px]" />main</span>} className="w-[71px]" />
                        <EditorTab label={<span className="flex items-center"><span className="w-[12px] h-[12px] rounded-full border-2 border-[#a5efac] mr-[7px]" />TitleScreen</span>} className="ml-[1px] w-[111px]" />
                        <EditorTab active label={<span className="flex items-center"><span className="w-[12px] h-[12px] rounded-full border-2 border-[#a5efac] mr-[6px]" />CreditScreen(*)<Ic w={12} h={12} className="ml-[11px]"><path d="M1 1l10 10M11 1L1 11" stroke={W} strokeWidth="2" /></Ic></span>} className="ml-[1px] w-[157px] pl-[2px]" />
                        <Ic w={14} h={14} className="ml-[10px]"><path d="M7 0v14M0 7h14" stroke="#6f7582" strokeWidth="1.500" /></Ic>
                        <Ic w={14} h={14} className="ml-auto mr-[6px]"><path d="M0 5V0h5L3.500 1.500 5.500 3.500l-2 2-2-2zM14 5V0H9l1.500 1.500-2 2 2 2 2-2zM0 9v5h5l-1.500-1.500 2-2-2-2-2 2zM14 9v5H9l1.500-1.500-2-2 2-2 2 2z" fill={W} /></Ic>
                    </div>
                    <Toolbar />
                    <Canvas />
                    <Debugger />
                </div>
                <div className="ml-[10px] flex">
                    <RightDock />
                </div>
            </div>
        </div>
    );
}
